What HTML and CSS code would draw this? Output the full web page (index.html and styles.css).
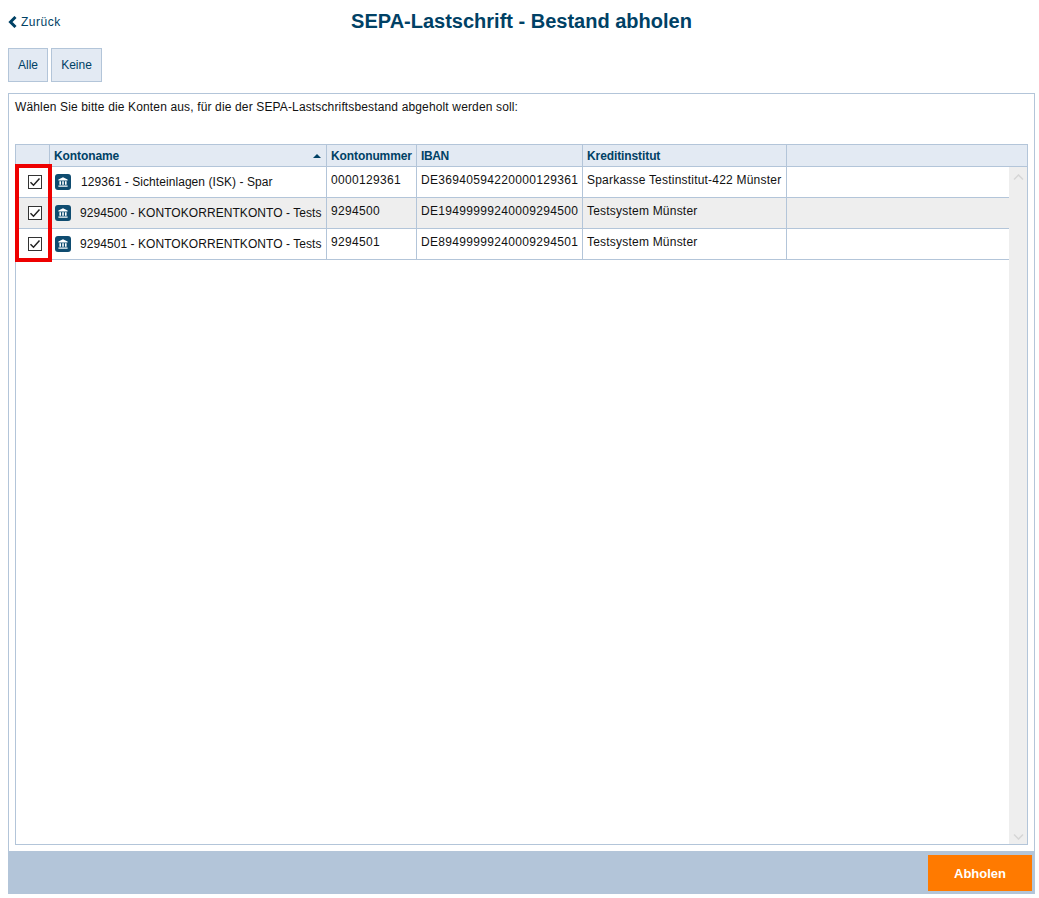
FILE: index.html
```html
<!DOCTYPE html>
<html lang="de">
<head>
<meta charset="utf-8">
<title>SEPA-Lastschrift - Bestand abholen</title>
<link rel="stylesheet" href="styles.css">
</head>
<body>
<header class="topbar">
  <a class="back" href="#">
    <svg class="back-icon" width="9" height="12" viewBox="0 0 9 12"><path d="M7.500 1 2.500 6l5 5" fill="none" stroke="#004165" stroke-width="3"/></svg>
    Zurück
  </a>
  <h1 class="title">SEPA-Lastschrift - Bestand abholen</h1>
</header>
<div class="toolbar">
  <button class="tool-btn btn-all">Alle</button>
  <button class="tool-btn btn-none">Keine</button>
</div>
<main class="panel">
  <p class="intro">Wählen Sie bitte die Konten aus, für die der SEPA-Lastschriftsbestand abgeholt werden soll:</p>
  <section class="grid">
    <div class="head row-cols">
      <div class="hcell"></div>
      <div class="hcell hcell-sort">Kontoname<svg class="sort" width="8" height="4" viewBox="0 0 8 4"><path d="M4 0 8 4H0z" fill="#004165"/></svg></div>
      <div class="hcell">Kontonummer</div>
      <div class="hcell hcell-iban">IBAN</div>
      <div class="hcell">Kreditinstitut</div>
      <div class="hcell hcell-last"></div>
    </div>
    <div class="body">
      <div class="rows">
        <div class="row row-cols">
          <div class="cell cell-check"><span class="check"><svg width="12" height="10" viewBox="0 0 12 10"><path d="M1.500 5.200 4.500 8.200 10.500 1.600" fill="none" stroke="#222" stroke-width="1.500"/></svg></span></div>
          <div class="cell cell-name"><svg class="bank" width="16" height="16" viewBox="0 0 16 16"><rect width="16" height="16" rx="3" fill="#0f4c70"/><path d="M8 3.200 3.400 5.600v.8h9.200v-.8zM4.400 7.200h1.600v3.600H4.400zM7.200 7.200h1.600v3.600H7.200zM10 7.200h1.600v3.600H10zM3.400 11.400h9.200v1.300H3.400z" fill="#fff"/></svg><span class="name name-a">129361 - Sichteinlagen (ISK) - Spar</span></div>
          <div class="cell cell-num">0000129361</div>
          <div class="cell cell-num">DE36940594220000129361</div>
          <div class="cell cell-bank">Sparkasse Testinstitut-422 Münster</div>
          <div class="cell cell-last"></div>
        </div>
        <div class="row row-alt row-cols">
          <div class="cell cell-check"><span class="check"><svg width="12" height="10" viewBox="0 0 12 10"><path d="M1.500 5.200 4.500 8.200 10.500 1.600" fill="none" stroke="#222" stroke-width="1.500"/></svg></span></div>
          <div class="cell cell-name"><svg class="bank" width="16" height="16" viewBox="0 0 16 16"><rect width="16" height="16" rx="3" fill="#0f4c70"/><path d="M8 3.200 3.400 5.600v.8h9.200v-.8zM4.400 7.200h1.600v3.600H4.400zM7.200 7.200h1.600v3.600H7.200zM10 7.200h1.600v3.600H10zM3.400 11.400h9.200v1.300H3.400z" fill="#fff"/></svg><span class="name">9294500 - KONTOKORRENTKONTO - Tests</span></div>
          <div class="cell cell-num">9294500</div>
          <div class="cell cell-num">DE19499999240009294500</div>
          <div class="cell cell-bank">Testsystem Münster</div>
          <div class="cell cell-last"></div>
        </div>
        <div class="row row-cols">
          <div class="cell cell-check"><span class="check"><svg width="12" height="10" viewBox="0 0 12 10"><path d="M1.500 5.200 4.500 8.200 10.500 1.600" fill="none" stroke="#222" stroke-width="1.500"/></svg></span></div>
          <div class="cell cell-name"><svg class="bank" width="16" height="16" viewBox="0 0 16 16"><rect width="16" height="16" rx="3" fill="#0f4c70"/><path d="M8 3.200 3.400 5.600v.8h9.200v-.8zM4.400 7.200h1.600v3.600H4.400zM7.200 7.200h1.600v3.600H7.200zM10 7.200h1.600v3.600H10zM3.400 11.400h9.200v1.300H3.400z" fill="#fff"/></svg><span class="name">9294501 - KONTOKORRENTKONTO - Tests</span></div>
          <div class="cell cell-num">9294501</div>
          <div class="cell cell-num">DE89499999240009294501</div>
          <div class="cell cell-bank">Testsystem Münster</div>
          <div class="cell cell-last"></div>
        </div>
      </div>
      <div class="scrollbar">
        <svg width="11" height="6" viewBox="0 0 11 6"><path d="M1 5.500 5.500 1 10 5.500" fill="none" stroke="#d6d6d6" stroke-width="1.500"/></svg>
        <svg width="11" height="6" viewBox="0 0 11 6"><path d="M1 .5 5.500 5 10 .5" fill="none" stroke="#d6d6d6" stroke-width="1.500"/></svg>
      </div>
      <div class="highlight"></div>
    </div>
  </section>
</main>
<footer class="footer">
  <button class="submit">Abholen</button>
</footer>
</body>
</html>
```
FILE: styles.css
```css
* { box-sizing: border-box; }
html, body { margin: 0; padding: 0; background: #fff; }
body {
  padding: 0 4px 0 8px;
  height: 898px;
  overflow: hidden;
  font: 12px/14px "Liberation Sans", Arial, sans-serif;
  color: #111;
}
.topbar {
  position: relative;
  height: 48px;
  display: flex;
  align-items: flex-start;
}
.back {
  position: absolute;
  left: 0;
  top: 15px;
  display: flex;
  align-items: center;
  gap: 4px;
  color: #004165;
  text-decoration: none;
  line-height: 14px;
  letter-spacing: 0.5px;
}
.title {
  flex: 1;
  margin: 9px 0 0;
  text-align: center;
  font-size: 20px;
  line-height: 24px;
  font-weight: bold;
  color: #004165;
}
.toolbar {
  display: flex;
  gap: 3px;
  height: 34px;
}
.tool-btn {
  height: 34px;
  padding: 0;
  border: 1px solid #b3c5d9;
  background: #e3eaf3;
  color: #004165;
  font: 12px "Liberation Sans", Arial, sans-serif;
}
.btn-all { width: 40px; }
.btn-none { width: 51px; }
.panel {
  margin-top: 11px;
  width: 1027px;
  height: 758px;
  border: 1px solid #b3c5d9;
  border-bottom: 0;
  padding: 6px 6px 0;
}
.intro {
  margin: 0;
  height: 44px;
  line-height: 14px;
  letter-spacing: 0.143px;
}
.grid {
  width: 1013px;
  height: 701px;
  border: 1px solid #b3c5d9;
  display: flex;
  flex-direction: column;
}
.row-cols {
  display: grid;
  grid-template-columns: 34px 277px 90px 166px 204px 1fr;
}
.head {
  height: 22px;
  background: #e3eaf3;
  border-bottom: 1px solid #b3c5d9;
}
.hcell {
  padding: 4px 4px 0;
  font-weight: bold;
  color: #004165;
  border-right: 1px solid #b3c5d9;
  letter-spacing: -0.1px;
}
.hcell-iban { letter-spacing: -0.4px; }
.hcell-last { border-right: 0; }
.hcell-sort {
  display: flex;
  justify-content: space-between;
}
.sort { margin: 5px 1px 0 0; }
.body {
  position: relative;
  flex: 1;
  display: flex;
}
.rows {
  flex: 1;
  min-width: 0;
}
.row {
  height: 31px;
  border-bottom: 1px solid #b3c5d9;
  background: #fff;
}
.row-alt { background: #eee; }
.cell {
  padding: 6px 4px 0;
  border-right: 1px solid #b3c5d9;
  white-space: nowrap;
  overflow: hidden;
}
.cell-num { letter-spacing: 0.32px; }
.cell-bank { letter-spacing: 0.21px; }
.cell-last { border-right: 0; }
.cell-check {
  border-right: 0;
  padding: 8px 0 0 12px;
}
.cell-name {
  display: flex;
  align-items: center;
  padding: 0 4px 0 5px;
}
.bank { flex: none; }
.name { margin-left: 9px; letter-spacing: 0.06px; }
.name-a { margin-left: 10px; }
.check {
  width: 14px;
  height: 14px;
  border: 1px solid #333;
  background: #fff;
  display: flex;
  align-items: center;
  justify-content: center;
}
.scrollbar {
  width: 18px;
  flex: none;
  background: #eee;
  display: flex;
  flex-direction: column;
  align-items: center;
  justify-content: space-between;
  padding: 7px 0 4px;
}
.highlight {
  position: absolute;
  left: -1px;
  top: -3px;
  width: 37px;
  height: 98px;
  border: 4px solid #ee0000;
  pointer-events: none;
}
.footer {
  width: 1027px;
  height: 43px;
  background: #b3c5d9;
  display: flex;
  justify-content: flex-end;
  padding: 4px 3px 0 0;
}
.submit {
  width: 104px;
  height: 36px;
  border: 0;
  padding: 0;
  background: #ff7a00;
  color: #fff;
  font: bold 13px "Liberation Sans", Arial, sans-serif;
}
```
